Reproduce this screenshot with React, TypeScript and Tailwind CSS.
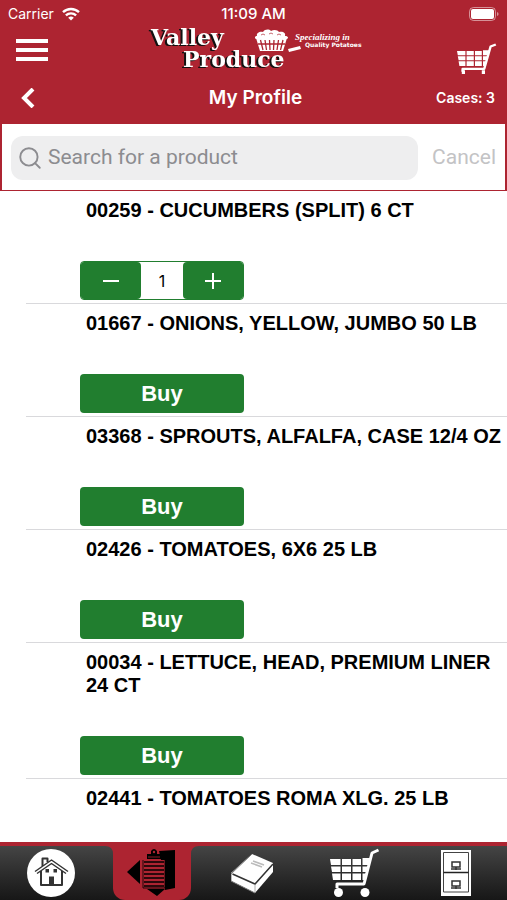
import { Search } from "lucide-react";

const products = [
  { code: "00259", name: "CUCUMBERS (SPLIT) 6 CT", quantity: 1 },
  { code: "01667", name: "ONIONS, YELLOW, JUMBO 50 LB", quantity: 0 },
  { code: "03368", name: "SPROUTS, ALFALFA, CASE 12/4 OZ", quantity: 0 },
  { code: "02426", name: "TOMATOES, 6X6 25 LB", quantity: 0 },
  { code: "00034", name: "LETTUCE, HEAD, PREMIUM LINER 24 CT", quantity: 0 },
  { code: "02441", name: "TOMATOES ROMA XLG. 25 LB", quantity: 0 },
];

const WifiIcon = () => (
  <svg viewBox="0 0 18 14" className="w-[18px] h-[14px]" fill="none" stroke="white" strokeWidth="2.4">
    <path d="M1 5.2a11.5 11.5 0 0 1 16 0" />
    <path d="M3.9 8.4a7.4 7.4 0 0 1 10.2 0" />
    <path d="M9 13.6 6.2 10.8a4 4 0 0 1 5.6 0Z" fill="white" stroke="none" />
  </svg>
);

const BatteryIcon = () => (
  <svg viewBox="0 0 30 14" className="w-[30px] h-[14px]">
    <rect x="0.5" y="0.5" width="26" height="13" rx="4" fill="none" stroke="white" strokeOpacity="0.5" />
    <rect x="2" y="2" width="23" height="10" rx="2" fill="white" />
    <path d="M28 5v4q1.6-.6 1.6-2T28 5Z" fill="white" fillOpacity="0.5" />
  </svg>
);

const Logo = () => (
  <svg viewBox="0 0 224 48" className="w-56 h-12 overflow-visible" role="img" aria-label="Valley Produce">
    <g
      className="drop-shadow-[-2px_1px_0_#111]"
      fill="white"
      fontFamily="'DejaVu Serif', serif"
      fontWeight="700"
      fontSize="22"
    >
      <text x="10" y="17">Valley</text>
      <text x="42" y="39">Produce</text>
    </g>
    <path d="M116 8c-1-3 3-5 6-4 2-3 6-3 8-1 3-2 7-1 8 1 4-1 7 1 6 4 3 0 4 2 2 3h-31c-2-1-1-3 1-3Z" fill="white" />
    <path d="M120 7q2-2 4 0M128 6q2-2 4 0M136 7q2-2 4 0" fill="none" stroke="#ad2431" strokeWidth="0.7" />
    <path d="M115 10h31l-4 13h-23Z" fill="white" />
    <path d="M119.500 12l2.500 10M124 12l1.500 10M128.500 12l.5 10M133 12l-.5 10M137.500 12l-1.500 10M142 12l-2.500 10M117 16h27" stroke="#ad2431" strokeWidth="1.300" />
    <path d="M147 21l12-3 1 3-12 3Z" fill="white" />
    <text x="154" y="12" fill="white" fontFamily="'Liberation Serif', serif" fontWeight="700" fontStyle="italic" fontSize="9">
      Specializing in
    </text>
    <text x="164" y="19" fill="white" fontFamily="'DejaVu Sans', sans-serif" fontWeight="700" fontSize="6">
      Quality Potatoes
    </text>
  </svg>
);

const CartIcon = ({ className, wheels }: { className: string; wheels?: boolean }) => (
  <svg viewBox="0 0 50 50" preserveAspectRatio="none" className={className} fill="white">
    <path d="M0 11h10.500v6H1ZM12 11h9v6h-9ZM22.500 11h8.500v6h-8.500ZM32.500 10h8l-2 7h-6ZM1 18.500h9.500v5.500H2ZM12 18.500h9v5.500h-9ZM22.500 18.500h8.500v5.500h-8.500ZM32.500 18.500h6l-2 5.500h-4ZM2 25.500h8.500v6.500H3ZM12 25.500h9v6.500h-9ZM22.500 25.500h8.500v6.500h-8.500ZM32.500 25.500h4l-2 6.500h-2Z" />
    <path d="M48.500 2 42 5 34 36H7v4" fill="none" stroke="white" strokeWidth="3" strokeLinejoin="round" />
    {wheels ? (
      <>
        <circle cx="8.500" cy="44.500" r="4.500" />
        <circle cx="35" cy="44.500" r="4.500" />
      </>
    ) : (
      <path d="M6 38h4v5H6ZM31 38h4v5h-4Z" />
    )}
  </svg>
);

const HouseIcon = () => (
  <svg viewBox="0 0 48 48" className="w-12 h-12">
    <circle cx="24" cy="24" r="24" fill="white" />
    <g fill="none" stroke="#333" strokeWidth="2" strokeLinejoin="round">
      <path d="M14 22v14h21V22M15.500 17V9.500h5V13" />
      <path d="M8 22.500 24.500 11 41 22.500M10 24.500l14.500-10 14.500 10" strokeWidth="1.500" />
    </g>
    <path d="M18.500 20h3.500v3.500h-3.500ZM26.500 20H30v3.500h-3.500Z" fill="#333" />
    <path d="M22 36v-8.500h5V36Z" fill="#333" />
  </svg>
);

const OrderIcon = () => (
  <svg viewBox="0 0 50 50" className="w-[50px] h-[50px]">
    <path d="M0 24 13 12v24Z" />
    <path d="M32 3 48 2v38l-10 2V12h-4ZM20 41h18l-8 7Z" />
    <path
      d="M17 14h20M17 18h20M17 22h20M17 26h20M17 30h20M17 34h20M17 38h20"
      stroke="black"
      strokeWidth="1.400"
    />
    <path d="M16 12v28h22V12" fill="none" stroke="black" strokeWidth="0.800" />
    <path d="M20 6h4V3q3-4 6 0v3h4v5H20Z" />
    <path d="M21 9h12" stroke="#ad2431" strokeWidth="0.800" />
    <circle cx="27" cy="4" r="1.200" fill="#ad2431" />
  </svg>
);

const BookIcon = () => (
  <svg viewBox="0 0 44 41" className="w-11 h-[41px]">
    <path d="M21 1 42 10v9L24 40 0 28v-8Z" fill="white" />
    <path d="M21 1 0 21v7l24 12" fill="none" stroke="#777" strokeWidth="1" />
    <path d="M1.500 21 24 31 42 11" fill="none" stroke="#333" strokeWidth="1.500" />
    <path d="M24 31v8" stroke="#999" strokeWidth="0.800" />
    <path d="M22 8l11 4M20 10l11 4" stroke="#bbb" strokeWidth="1.500" />
  </svg>
);

const CabinetIcon = () => (
  <svg viewBox="0 0 30 46" className="w-[30px] h-[46px]">
    <path d="M0 0h30v46H0Z" fill="white" />
    <path d="M2.500 2.500h25V42h-25Z" fill="none" stroke="#444" strokeWidth="1" />
    <path d="M2.500 22.500h25" stroke="#222" strokeWidth="1.500" />
    <path d="M11 12h8v5h-8ZM10 19h10M15 17v3M11 31h8v5h-8ZM10 38h10M15 36v3" fill="none" stroke="#333" strokeWidth="1.500" />
  </svg>
);

const QuantityStepper = ({ quantity }: { quantity: number }) => (
  <div className="flex w-41 h-[39px] border border-[#217e2f] rounded bg-white overflow-hidden">
    <button aria-label="Decrease quantity" className="flex-1 flex items-center justify-center bg-[#217e2f] rounded-r-sm">
      <span className="w-4 h-0.5 bg-white" />
    </button>
    <input
      aria-label="Quantity"
      defaultValue={quantity}
      className="w-[42px] text-center text-base font-['Inter',sans-serif] text-black outline-none"
    />
    <button aria-label="Increase quantity" className="flex-1 flex items-center justify-center bg-[#217e2f] rounded-l-sm">
      <svg viewBox="0 0 16 16" className="w-4 h-4" stroke="white" strokeWidth="2">
        <path d="M0 8h16M8 0v16" />
      </svg>
    </button>
  </div>
);

const App = () => {
  return (
    <div className="min-h-screen flex flex-col bg-white text-black font-['Liberation_Sans',Arial,sans-serif]">
      <header className="bg-[#ad2431] text-white">
        <div className="grid grid-cols-3 items-center h-7 px-2 font-['Inter',sans-serif]">
          <div className="flex items-center gap-2 text-sm">
            Carrier
            <WifiIcon />
          </div>
          <span className="text-center text-[15px] font-medium">11:09 AM</span>
          <div className="flex justify-end">
            <BatteryIcon />
          </div>
        </div>
        <div className="flex items-start justify-between h-12 pl-4 pr-2.5">
          <button aria-label="Menu" className="flex flex-col gap-[5px] pt-[11px]">
            <span className="w-8 h-1 bg-white" />
            <span className="w-8 h-1 bg-white" />
            <span className="w-8 h-1 bg-white" />
          </button>
          <Logo />
          <button aria-label="Cart" className="pt-[15px]">
            <CartIcon className="w-10 h-9" />
          </button>
        </div>
        <div className="grid grid-cols-3 items-center h-12 pl-4 pr-3 pb-1 font-['Inter',sans-serif]">
          <button aria-label="Back" className="justify-self-start p-1">
            <svg viewBox="0 0 16 20" className="w-4 h-5" fill="none" stroke="white" strokeWidth="4">
              <path d="M13 1 4 10l9 9" />
            </svg>
          </button>
          <h1 className="text-center text-[19px] font-semibold">My Profile</h1>
          <span className="text-right text-sm font-semibold">Cases: 3</span>
        </div>
      </header>

      <div className="flex items-center gap-3.5 h-[67px] px-[9px] pt-0.5 border-x-2 border-b border-[#ad2431]">
        <label className="flex-1 flex items-center gap-[5px] h-11 px-1.5 bg-[#eeeeef] rounded-xl text-[#8c8c90]">
          <Search className="w-[26px] h-[26px] shrink-0" strokeWidth={1.75} />
          <input
            type="search"
            aria-label="Search for a product"
            placeholder="Search for a product"
            className="w-full bg-transparent outline-none text-[21px] font-['Roboto',sans-serif] placeholder:text-[#8c8c90]"
          />
        </label>
        <button className="text-[21px] font-['Roboto',sans-serif] text-[#c3c3c5]">Cancel</button>
      </div>

      <main className="flex-1">
        <ul className="pl-[26px]">
          {products.map((product, index) => (
            <li
              key={product.code}
              className={index < products.length - 1 ? "pt-2 pb-[3px] pl-[54px] border-b border-[#d9d9dc]" : "pt-2 pl-[54px]"}
            >
              <h2 className="pl-1.5 text-xl leading-[23px] font-bold">{`${product.code} - ${product.name}`}</h2>
              {index < products.length - 1 && (
                <div className="pt-[39px]">
                  {product.quantity > 0 ? (
                    <QuantityStepper quantity={product.quantity} />
                  ) : (
                    <button className="block w-41 h-[39px] bg-[#217e2f] rounded text-white text-[22px] font-bold">Buy</button>
                  )}
                </div>
              )}
            </li>
          ))}
        </ul>
      </main>

      <nav className="grid grid-cols-5 h-[58px] border-t-4 border-[#ad2431] bg-linear-to-b from-[#454545] to-[#171717]">
        <a href="#home" aria-label="Home" className="flex items-center justify-center">
          <HouseIcon />
        </a>
        <a href="#orders" aria-label="Orders" className="relative flex items-center justify-center mx-3 bg-[#ad2431] rounded-b-xl">
          <svg viewBox="0 0 8 8" className="absolute top-0 -left-2 w-2 h-2" fill="#ad2431">
            <path d="M0 0h8v8Q8 0 0 0Z" />
          </svg>
          <OrderIcon />
          <svg viewBox="0 0 8 8" className="absolute top-0 -right-2 w-2 h-2" fill="#ad2431">
            <path d="M8 0H0v8Q0 0 8 0Z" />
          </svg>
        </a>
        <a href="#catalog" aria-label="Catalog" className="flex items-center justify-center">
          <BookIcon />
        </a>
        <a href="#cart" aria-label="Shopping cart" className="flex items-center justify-center">
          <CartIcon className="w-[50px] h-[50px]" wheels />
        </a>
        <a href="#history" aria-label="Order history" className="flex items-center justify-center">
          <CabinetIcon />
        </a>
      </nav>
    </div>
  );
};

export default App;
